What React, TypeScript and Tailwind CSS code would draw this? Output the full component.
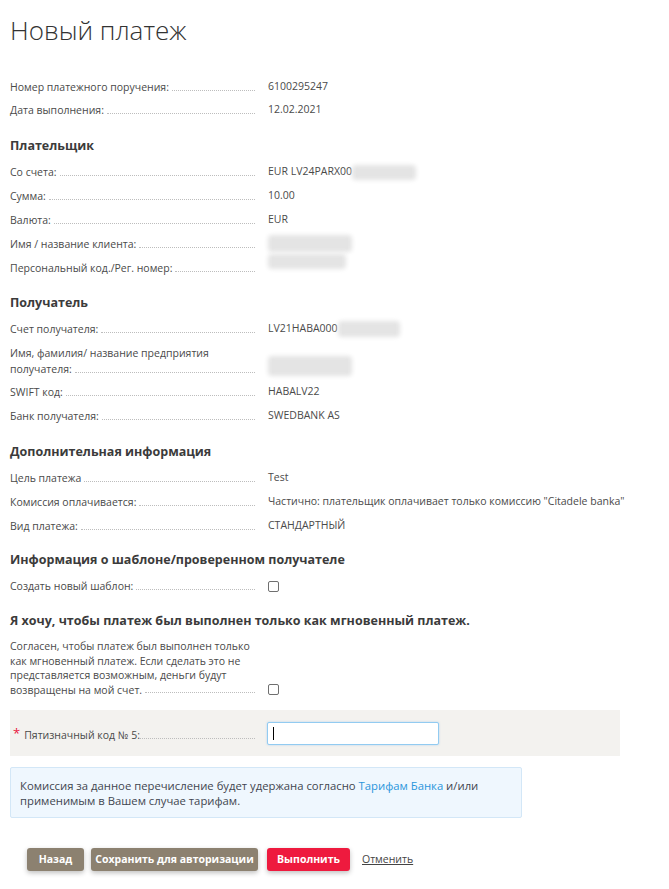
import React from "react";

type Row = {
  label: string[];
  value?: React.ReactNode;
  tall?: boolean;
};

const Blur = ({ w, h }: { w: number; h: number }) => (
  <span
    className="inline-block rounded-sm bg-[#e4e4e4] blur-[2px]"
    style={{ width: w, height: h }}
  />
);

const Checkbox = () => (
  <span className="inline-block h-[11px] w-[11px] rounded-[2px] border border-[#6f6f6f] bg-white" />
);

const Label = ({ lines, lh = 16 }: { lines: string[]; lh?: number }) => {
  const last = lines[lines.length - 1];
  return (
    <div className="w-[245px] shrink-0" style={{ lineHeight: `${lh}px` }}>
      {lines.slice(0, -1).map((l) => (
        <div key={l} className="whitespace-nowrap">{l}</div>
      ))}
      <div className="flex items-end">
        <span className="whitespace-nowrap">{last}</span>
        <span className="mb-[4px] ml-[3px] flex-1 border-b border-dotted border-[#bdbdbd]" />
      </div>
    </div>
  );
};

const InfoRow = ({ label, value, tall }: Row) => (
  <div className={tall ? "flex h-[39px] items-center" : "flex h-6 items-center"}>
    <Label lines={label} />
    <div className="ml-[13px] flex items-center">{value}</div>
  </div>
);

const Section = ({ title, children, mt = "mt-[14px]" }: { title: string; children: React.ReactNode; mt?: string }) => (
  <div className={mt}>
    <h2 className="mb-1 flex h-5 items-center whitespace-nowrap text-[12.5px] font-bold text-[#3b3b3b]">{title}</h2>
    {children}
  </div>
);

export default function App() {
  return (
    <div className="min-h-[889px] bg-white px-[10px] font-['Open_Sans',sans-serif] text-[10.5px] text-[#4a4a4a]">
      <h1 className="pt-[12px] text-[26px] leading-[36px] font-light text-[#333]">Новый платеж</h1>

      <div className="mt-[27px]">
        <InfoRow label={["Номер платежного поручения:"]} value="6100295247" />
        <div className="-mt-px">
          <InfoRow label={["Дата выполнения:"]} value="12.02.2021" />
        </div>
      </div>

      <Section title="Плательщик">
        <InfoRow
          label={["Со счета:"]}
          value={
            <>
              EUR LV24PARX00
              <Blur w={64} h={15} />
            </>
          }
        />
        <InfoRow label={["Сумма:"]} value="10.00" />
        <InfoRow label={["Валюта:"]} value="EUR" />
        <InfoRow label={["Имя / название  клиента:"]} value={<span className="-mb-1"><Blur w={84} h={17} /></span>} />
        <InfoRow label={["Персональный код./Рег. номер:"]} value={<span className="-mt-2"><Blur w={78} h={15} /></span>} />
      </Section>

      <Section title="Получатель" mt="mt-[13px]">
        <InfoRow
          label={["Счет получателя:"]}
          value={
            <>
              LV21HABA000
              <Blur w={62} h={16} />
            </>
          }
        />
        <InfoRow
          tall
          label={["Имя, фамилия/ название предприятия", "получателя:"]}
          value={<span className="mt-[16px]"><Blur w={84} h={20} /></span>}
        />
        <InfoRow label={["SWIFT код:"]} value="HABALV22" />
        <InfoRow label={["Банк получателя:"]} value="SWEDBANK AS" />
      </Section>

      <Section title="Дополнительная информация" mt="mt-[14px]">
        <InfoRow label={["Цель платежа"]} value="Test" />
        <InfoRow
          label={["Комиссия оплачивается:"]}
          value={<span className="whitespace-nowrap">Частично: плательщик оплачивает только комиссию "Citadele banka"</span>}
        />
        <InfoRow label={["Вид платежа:"]} value="СТАНДАРТНЫЙ" />
      </Section>

      <Section title="Информация о шаблоне/проверенном получателе" mt="mt-[12px]">
        <InfoRow label={["Создать новый шаблон:"]} value={<Checkbox />} />
      </Section>

      <Section title="Я хочу, чтобы платеж был выполнен только как мгновенный платеж." mt="mt-[13px]">
        <div className="mt-[8px] flex items-end">
          <Label
            lh={14.5}
            lines={[
              "Согласен, чтобы платеж был выполнен только",
              "как мгновенный платеж. Если сделать это не",
              "представляется возможным, деньги будут",
              "возвращены на мой счет.",
            ]}
          />
          <div className="mb-[2px] ml-[13px] flex">
            <Checkbox />
          </div>
        </div>
      </Section>

      <div className="mt-[13px] flex h-[46px] w-[610px] items-center bg-[#f3f2ef]">
        <div className="flex w-[245px] items-end pt-[5px]">
          <span className="ml-[3px] self-start text-[13px] leading-[10px] text-[#e8173d]">*</span>
          <span className="ml-[4px] whitespace-nowrap">Пятизначный код № 5:</span>
          <span className="mb-[4px] flex-1 border-b border-dotted border-[#bdbdbd]" />
        </div>
        <div className="ml-[12px] flex h-[23px] w-[172px] items-center rounded-[2px] border border-[#92cbf1] bg-white px-[5px] shadow-[0_0_2px_rgba(110,180,235,0.5)]">
          <span className="h-[13px] w-px bg-black" />
        </div>
      </div>

      <div className="mt-[11px] w-[512px] rounded-[2px] border border-[#d3e7f7] bg-[#eff7fe] px-[9px] py-[9.5px] text-[11.3px] leading-[15px] text-[#3f4650]">
        Комиссия за данное перечисление будет удержана согласно{" "}
        <a className="text-[#2a96dc]">Тарифам Банка</a> и/или
        <br />
        применимым в Вашем случае тарифам.
      </div>

      <div className="mt-[30px] flex items-center pl-[17px]">
        <button className="h-[23px] w-[57px] rounded-[3px] bg-[#8c8170] text-[10.5px] font-bold text-white shadow-[0_2px_5px_rgba(0,0,0,0.25)]">
          Назад
        </button>
        <button className="ml-[7px] h-[23px] w-[167px] rounded-[3px] bg-[#8c8170] text-[10.5px] font-bold text-white shadow-[0_2px_5px_rgba(0,0,0,0.25)]">
          Сохранить для авторизации
        </button>
        <button className="ml-[9px] h-[23px] w-[83px] rounded-[3px] bg-[#ee1a3e] text-[10.5px] font-bold text-white shadow-[0_2px_5px_rgba(0,0,0,0.25)]">
          Выполнить
        </button>
        <a className="ml-[12px] text-[10.5px] text-[#444] underline">Отменить</a>
      </div>
    </div>
  );
}
